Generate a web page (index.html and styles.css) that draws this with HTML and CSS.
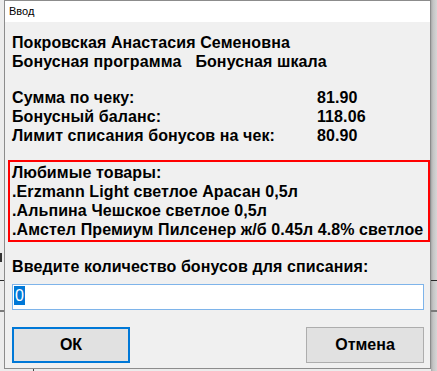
FILE: index.html
```html
<!DOCTYPE html>
<html lang="ru">
<head>
    <meta charset="UTF-8">
    <title>Ввод</title>
    <link rel="stylesheet" href="styles.css">
</head>
<body>
    <div class="window">
        <div class="title-bar">Ввод</div>
        <div class="client">
            <div class="client-name">
                <div>Покровская Анастасия Семеновна</div>
                <div class="program-row">
                    <span>Бонусная программа</span>
                    <span>Бонусная шкала</span>
                </div>
            </div>

            <div class="totals">
                <span>Сумма по чеку:</span><span>81.90</span>
                <span>Бонусный баланс:</span><span>118.06</span>
                <span>Лимит списания бонусов на чек:</span><span>80.90</span>
            </div>

            <div class="favorites">
                <div>Любимые товары:</div>
                <div>.Erzmann Light светлое Арасан 0,5л</div>
                <div>.Альпина Чешское светлое 0,5л</div>
                <div>.Амстел Премиум Пилсенер ж/б 0.45л 4.8% светлое</div>
            </div>

            <label for="bonus" class="bonus-label">Введите количество бонусов для списания:</label>
            <div class="bonus-input" id="bonus"><span class="selected">0</span></div>

            <div class="buttons">
                <button class="btn btn-default">ОК</button>
                <button class="btn">Отмена</button>
            </div>
        </div>
    </div>
    <div class="desk-tick"></div>
</body>
</html>
```

FILE: styles.css
```css
html, body {
    margin: 0;
    padding: 0;
    height: 371px;
    overflow: hidden;
}

body {
    font-family: "Liberation Sans", Arial, sans-serif;
    position: relative;
    background:
        linear-gradient(to bottom, transparent 280px, #2a2a2a 280px, #2a2a2a 281px, transparent 281px),
        linear-gradient(to bottom, transparent 310px, #7a7a7a 310px, #7a7a7a 312px, transparent 312px),
        linear-gradient(to right, #ececec 0, #ececec 431px, #a8a8a8 431px, #c4c4c4 433px, #d6d6d6 437px);
}

/* dark fragment of a letter behind the dialog */
body::before {
    content: "";
    position: absolute;
    left: 0;
    top: 253px;
    width: 2px;
    height: 9px;
    background: #333;
}

.desk-tick {
    position: absolute;
    left: 33px;
    top: 369px;
    width: 1px;
    height: 2px;
    background: #444;
}

.window {
    margin-left: 4px;
    width: 425px;
    height: 367px;
    border: 1px solid #8c8c8c;
    background-color: #f0f0f0;
    box-sizing: content-box;
}

.title-bar {
    height: 21px;
    background-color: white;
    font-size: 11px;
    line-height: 21px;
    padding-left: 4px;
    color: #000;
}

.client {
    padding: 11px 6px 0 7px;
    font-size: 16px;
    font-weight: bold;
    line-height: 19px;
    letter-spacing: 0.1px;
    color: #000;
}

.program-row {
    display: flex;
    gap: 14px;
}

.totals {
    display: grid;
    grid-template-columns: 305px auto;
    margin-top: 17px;
}

.favorites {
    margin: 15px -6px 0 -4px;
    border: 2px solid #ff0000;
    padding: 1px 2px 0 2px;
    height: 77px;
    box-sizing: content-box;
}

.bonus-label {
    display: block;
    margin-top: 15px;
}

.bonus-input {
    margin-top: 8px;
    border: 1px solid #7eb4ea;
    background-color: white;
    font-weight: normal;
    letter-spacing: 0;
    padding: 1px 0 0 1px;
    box-sizing: border-box;
    height: 26px;
}

.selected {
    display: inline-block;
    background-color: #0078d7;
    color: white;
    padding: 0 1px;
    line-height: 19px;
}

.buttons {
    display: flex;
    justify-content: space-between;
    margin-top: 17px;
}

.btn {
    width: 118px;
    height: 36px;
    font-family: "Liberation Sans", Arial, sans-serif;
    font-size: 16px;
    font-weight: bold;
    color: #000;
    background-color: #e1e1e1;
    border: 1px solid #adadad;
    padding: 0;
}

.btn-default {
    border: 2px solid #0078d7;
}
```
